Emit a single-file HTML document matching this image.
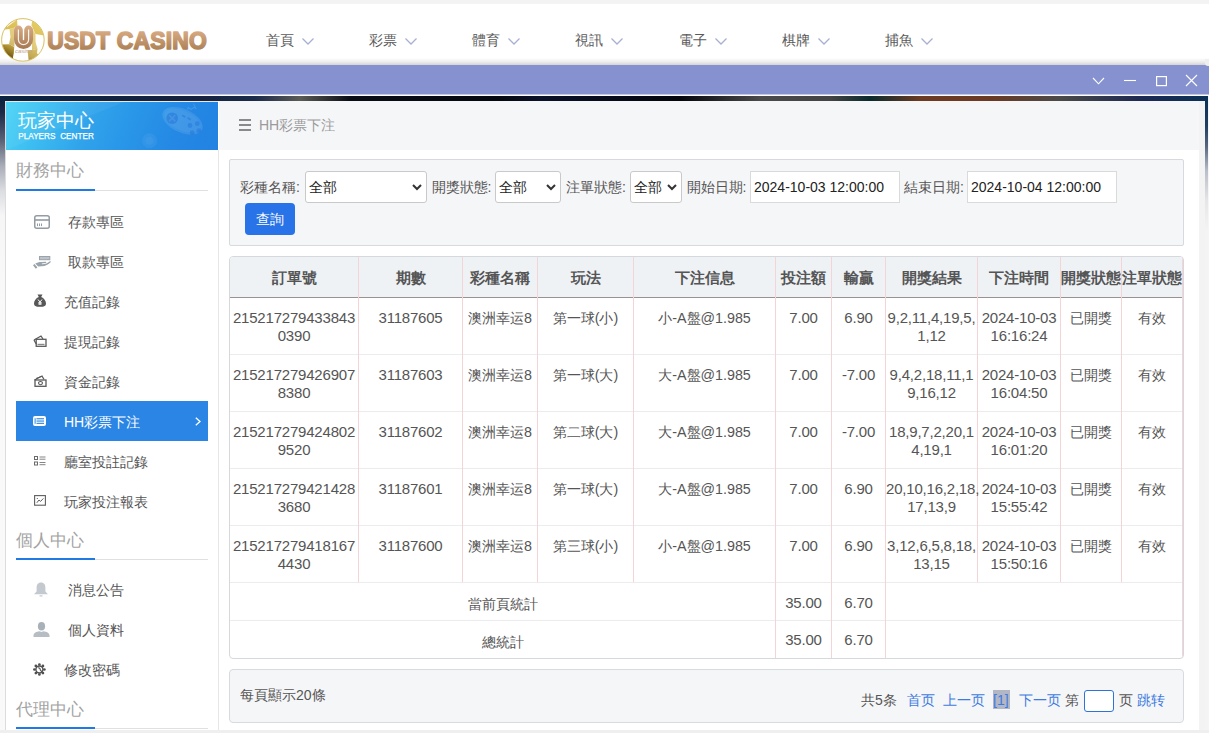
<!DOCTYPE html>
<html><head><meta charset="utf-8">
<style>
*{box-sizing:border-box}
html,body{margin:0;padding:0}
body{width:1209px;height:733px;overflow:hidden;position:relative;background:#fff;font-family:"Liberation Sans",sans-serif;color:#555}
.a{position:absolute}
.nav{position:absolute;top:31px;font-size:14px;color:#5a5a5a;line-height:18px;white-space:nowrap}
.nav svg{position:absolute;top:7px}
.lbl{font-size:14px;line-height:20px;color:#555;white-space:nowrap}
.sel{font-size:14px;line-height:20px;color:#222;white-space:nowrap}
.th{font-size:15px;line-height:20px;font-weight:700;color:#555;text-align:center;white-space:nowrap}
.td{line-height:18px;color:#555;text-align:center;white-space:nowrap}
.tn{font-size:15px;letter-spacing:-0.2px;line-height:18.3px;padding-top:1.5px}
.tc{font-size:14.3px;padding-top:1.5px}
.pg{font-size:14px;line-height:20px;color:#555;white-space:nowrap}
.lk{color:#3d7be0}
</style></head><body>
<!-- top strip -->
<div class="a" style="left:0;top:0;width:1209px;height:4px;background:#f3f3f3"></div>
<!-- header -->
<div class="a" style="left:0;top:4px;width:1209px;height:61px;background:linear-gradient(#fff 0,#fff 54px,#ececec 58px,#d4d4d4 61px)"></div>
<svg class="a" style="left:0;top:16px" width="48" height="48" viewBox="0 0 48 48">
<defs>
<linearGradient id="gold" gradientUnits="userSpaceOnUse" x1="32" y1="3" x2="12" y2="44"><stop offset="0" stop-color="#e6cc66"/><stop offset="0.5" stop-color="#d8bb50"/><stop offset="0.75" stop-color="#b89a38"/><stop offset="1" stop-color="#634a0c"/></linearGradient>
<linearGradient id="brn" gradientUnits="userSpaceOnUse" x1="0" y1="10" x2="0" y2="33"><stop offset="0" stop-color="#d7ab84"/><stop offset="1" stop-color="#a57850"/></linearGradient>
<clipPath id="cc"><circle cx="22.9" cy="23.9" r="21.2"/></clipPath>
<filter id="bl" x="-5%" y="-5%" width="110%" height="110%"><feGaussianBlur stdDeviation="0.45"/></filter>
</defs>
<circle cx="22.9" cy="23.9" r="21.6" fill="#fff"/>
<g clip-path="url(#cc)"><g fill="url(#gold)" filter="url(#bl)">
<path d="M1 14 L6 7 L16.7 1 L17.5 9.5 L14.4 11.8 L9.5 13 Z"/>
<path d="M32.7 1 L42 5 L46 14 L44 19.6 L35.5 18 L31.5 9.2 Z"/>
<path d="M9.5 13 L14.4 11.8 L14.4 30.8 L9 28.2 L10.5 21 Z" fill-opacity="0.75"/>
<path d="M0 28.5 L9 28.2 L14.2 31 L13.8 37 L13 41 L4 41 L0 35 Z"/>
<path d="M32 11.8 L35.5 18 L35.5 26 L37.5 32.7 L32 34 Z" fill-opacity="0.75"/>
<path d="M27.5 34.2 L32 34 L37.5 32.7 L37 37.2 L41 41 L33 46 L28.8 45.5 Z" fill-opacity="0.85"/>
<path d="M13 41 L13 47 L6 45 L3 40 Z"/>
</g></g>
<path d="M6.8 10.5 L15.8 3.8" stroke="#fff" stroke-width="1.3" stroke-opacity="0.85"/>
<circle cx="22.9" cy="23.9" r="21.3" fill="none" stroke="#d9c060" stroke-width="1"/>
<path d="M18.4 14 V23.5 A5.1 5.1 0 0 0 28.6 23.5 V14" fill="none" stroke="url(#brn)" stroke-width="8.8" stroke-linecap="round"/>
<path d="M18.4 13.6 V23.5 A5.1 5.1 0 0 0 28.6 23.5 V13.6" fill="none" stroke="#fff" stroke-opacity="0.9" stroke-width="1.2"/>
<text x="23.5" y="36.8" font-size="4.8" fill="#c4a48a" text-anchor="middle" font-family="Liberation Sans" font-style="italic" textLength="17" lengthAdjust="spacingAndGlyphs">casino</text>
</svg>

<svg class="a" style="left:40px;top:22px" width="180" height="34" viewBox="0 0 180 34">
<defs><linearGradient id="tg" x1="0" y1="0" x2="0" y2="1"><stop offset="0" stop-color="#dfb189"/><stop offset="1" stop-color="#a3774c"/></linearGradient></defs>
<text x="7.2" y="27.3" font-family="Liberation Sans" font-weight="bold" font-size="22.9" fill="url(#tg)" stroke="url(#tg)" stroke-width="1.5" stroke-linejoin="round" transform="scale(1,1.06)" transform-origin="0 27.3" letter-spacing="0.2">USDT CASINO</text>
</svg>
<div class="nav" style="left:265.5px">首頁<svg width="12" height="7" viewBox="0 0 12 7" style="left:36px"><path d="M0.5 0.5 L6 6 L11.5 0.5" fill="none" stroke="#a9afd3" stroke-width="1.3"/></svg></div>
<div class="nav" style="left:368.8px">彩票<svg width="12" height="7" viewBox="0 0 12 7" style="left:36px"><path d="M0.5 0.5 L6 6 L11.5 0.5" fill="none" stroke="#a9afd3" stroke-width="1.3"/></svg></div>
<div class="nav" style="left:472.1px">體育<svg width="12" height="7" viewBox="0 0 12 7" style="left:36px"><path d="M0.5 0.5 L6 6 L11.5 0.5" fill="none" stroke="#a9afd3" stroke-width="1.3"/></svg></div>
<div class="nav" style="left:575.4px">視訊<svg width="12" height="7" viewBox="0 0 12 7" style="left:36px"><path d="M0.5 0.5 L6 6 L11.5 0.5" fill="none" stroke="#a9afd3" stroke-width="1.3"/></svg></div>
<div class="nav" style="left:678.7px">電子<svg width="12" height="7" viewBox="0 0 12 7" style="left:36px"><path d="M0.5 0.5 L6 6 L11.5 0.5" fill="none" stroke="#a9afd3" stroke-width="1.3"/></svg></div>
<div class="nav" style="left:782px">棋牌<svg width="12" height="7" viewBox="0 0 12 7" style="left:36px"><path d="M0.5 0.5 L6 6 L11.5 0.5" fill="none" stroke="#a9afd3" stroke-width="1.3"/></svg></div>
<div class="nav" style="left:885.3px">捕魚<svg width="12" height="7" viewBox="0 0 12 7" style="left:36px"><path d="M0.5 0.5 L6 6 L11.5 0.5" fill="none" stroke="#a9afd3" stroke-width="1.3"/></svg></div>

<!-- purple bar -->
<div class="a" style="left:0;top:65px;width:1209px;height:29px;background:#8692cf"></div>
<div class="a" style="left:1205px;top:59px;width:4px;height:7px;background:#efefef;border-bottom-left-radius:3px"></div>
<div class="a" style="left:0;top:94px;width:1209px;height:1px;background:#c4c9e8"></div>
<svg class="a" style="left:1085px;top:70px" width="124" height="22" viewBox="0 0 124 22">
<path d="M8 8 L13.5 13.8 L19 8" fill="none" stroke="#fff" stroke-width="1.1"/>
<path d="M39 10.5 H51" stroke="#fff" stroke-width="1.1"/>
<rect x="71.6" y="6.6" width="9.8" height="9" fill="none" stroke="#fff" stroke-width="1.2"/>
<path d="M101 5 L112 16 M112 5 L101 16" stroke="#fff" stroke-width="1.1"/>
</svg><div class="a" style="left:0;top:95px;width:1209px;height:1px;background:#fff"></div>
<!-- dark bg -->
<div class="a" style="left:0;top:96px;width:1209px;height:637px;background:linear-gradient(90deg,#0b2440 0,#17233f 200px,#1c2b4a 255px,#5b5b56 300px,#0a0d15 350px,#05080f 500px,#0a1228 540px,#05060c 680px,#4a4a4a 760px,#444 830px,#0b2a2c 870px,#6b3b22 920px,#6a3a22 990px,#4b4a48 1060px,#1d2a52 1140px,#0b3256 1209px)"></div>
<div class="a" style="left:0;top:101px;width:5px;height:632px;background:linear-gradient(#0e2442 0,#1d2c48 12px,#5b6478 40px,#a9adb8 65px,#dcdde2 90px,#f6f6f7 115px,#f9f9f9 200px)"></div>
<div class="a" style="left:1205px;top:101px;width:3px;height:632px;background:linear-gradient(#0b3256 0,#1f3f62 25px,#56667e 45px,#b9bec8 70px,#e6e6e8 100px,#f4f4f4 130px)"></div><div class="a" style="left:1204px;top:200px;width:1px;height:530px;background:#e2e2e2"></div>
<div class="a" style="left:1208px;top:96px;width:1px;height:637px;background:#f5f5f5"></div>
<!-- window -->
<div id="win">
<div class="a" style="left:5px;top:101px;width:1200px;height:629px;background:#fff"></div>
<!-- sidebar -->
<div class="a" style="left:5px;top:101px;width:214px;height:629px;background:#fff;border-left:1px solid #dcdcdc"></div>
<div class="a" style="left:218px;top:150px;width:1px;height:580px;background:#e6e6e6"></div>
<div class="a" style="left:5px;top:101px;width:213px;height:1px;background:#e9e9e9"></div>
<div class="a" style="left:6px;top:102px;width:212px;height:48px;overflow:hidden;background:linear-gradient(112deg,#4ad4f6 0%,#3ab9f0 22%,#30a3eb 40%,#2996e8 58%,#2488e4 80%,#2282e2 100%)">
  <svg class="a" style="left:0;top:0" width="212" height="48"><path d="M0 0 L118 0 L0 48 Z" fill="#fff" fill-opacity="0.05"/></svg>
  <svg class="a" style="left:0;top:0" width="212" height="48" viewBox="0 0 212 48">
    <ellipse cx="176.5" cy="18.8" rx="21.5" ry="11.8" transform="rotate(24 176.5 18.8)" fill="#fff" fill-opacity="0.1"/>
    <ellipse cx="176.5" cy="18.8" rx="19.5" ry="9.8" transform="rotate(24 176.5 18.8)" fill="#fff" fill-opacity="0.04"/>
    <circle cx="166.2" cy="16.2" r="5.8" fill="#1a6fd8" fill-opacity="0.45"/>
    <path d="M163 13 L169.4 19.4 M169.4 13 L163 19.4" stroke="#fff" stroke-opacity="0.1" stroke-width="1.6"/>
    <g fill="#1a6fd8" fill-opacity="0.4"><circle cx="184" cy="23.5" r="2.4"/><circle cx="191.3" cy="21.7" r="2.4"/><circle cx="186.2" cy="30.7" r="2.4"/><circle cx="192.8" cy="28.6" r="2.4"/></g>
    <path d="M176.2 13.3 L179.3 15 M181.5 15.8 L184.8 17.8" stroke="#1a6fd8" stroke-opacity="0.4" stroke-width="1.8"/>
    <path d="M181.5 7.5 L182.2 5.3 L185 7.5 L188 5.3 L190.2 6.7 L187.3 1.6" stroke="#fff" stroke-opacity="0.12" fill="none" stroke-width="1.1"/>
    <circle cx="143.6" cy="38.8" r="7.5" fill="#fff" fill-opacity="0.05"/>
    <circle cx="143.6" cy="38.8" r="4" fill="#fff" fill-opacity="0.04"/>
  </svg>
  <div class="a" style="left:11.5px;top:8px;font-size:18.5px;line-height:22px;color:#fff;letter-spacing:0.3px">玩家中心</div>
  <div class="a" style="left:12.3px;top:30px;font-size:8.2px;line-height:10px;color:#fff;font-weight:normal;word-spacing:2.4px;-webkit-text-stroke:0.25px #fff">PLAYERS CENTER</div>
</div>
</div>
<div class="a" style="left:15.5px;top:161px;font-size:17px;line-height:20px;color:#a3a3a3">財務中心</div>
<div class="a" style="left:16px;top:190px;width:192px;height:1px;background:#e0e0e0"></div>
<div class="a" style="left:16px;top:189px;width:79px;height:2px;background:#1f7ae3"></div>
<div class="a" style="left:15.5px;top:530.5px;font-size:17px;line-height:20px;color:#a3a3a3">個人中心</div>
<div class="a" style="left:16px;top:559px;width:192px;height:1px;background:#e0e0e0"></div>
<div class="a" style="left:16px;top:558px;width:79px;height:2px;background:#1f7ae3"></div>
<div class="a" style="left:15.5px;top:699.5px;font-size:17px;line-height:20px;color:#a3a3a3">代理中心</div>
<div class="a" style="left:16px;top:728px;width:192px;height:1px;background:#e0e0e0"></div>
<div class="a" style="left:16px;top:727px;width:79px;height:2px;background:#1f7ae3"></div>
<div class="a" style="left:68px;top:211.5px;font-size:14px;line-height:20px;color:#555;white-space:nowrap">存款專區</div>
<svg class="a" style="left:34px;top:215px" width="16" height="14" viewBox="0 0 16 14"><rect x="0.75" y="0.75" width="14.5" height="12.5" rx="2" fill="none" stroke="#939ba3" stroke-width="1.5"/><rect x="1" y="4.2" width="14" height="1.6" fill="#939ba3"/><rect x="3" y="8.5" width="1" height="2.6" fill="#939ba3"/><rect x="5" y="8.5" width="1" height="2.6" fill="#939ba3"/><rect x="7" y="8.5" width="1" height="2.6" fill="#939ba3"/></svg>
<div class="a" style="left:68px;top:251.5px;font-size:14px;line-height:20px;color:#555;white-space:nowrap">取款專區</div>
<svg class="a" style="left:33px;top:256px" width="18" height="13" viewBox="0 0 18 13"><rect x="6.5" y="0.5" width="10.3" height="3.2" fill="#bcc3ca" stroke="#9aa2aa" stroke-width="1"/><path d="M2.3 7.6 C4 6.4 6 5.9 8 5.9 L12.6 5.7 C13.6 5.7 13.6 6.9 12.6 7.1 L8.6 7.5 L9.1 8.3 C12 8.3 15 7 17.3 5 L17.8 5.9 C15.5 8.5 12.5 10 8.5 10.3 L5.2 10.5 Z" fill="#9aa2aa"/><path d="M0.8 8.6 L3.6 12.2" stroke="#9aa2aa" stroke-width="2"/></svg>
<div class="a" style="left:64px;top:291.5px;font-size:14px;line-height:20px;color:#555;white-space:nowrap">充值記錄</div>
<svg class="a" style="left:33px;top:294px" width="14" height="13" viewBox="0 0 14 13"><path d="M4.5 0.5 L9.5 0.5 L8.2 3 C11 4 13 7 13 9.5 C13 12 11 12.8 7 12.8 C3 12.8 1 12 1 9.5 C1 7 3 4 5.8 3 Z" fill="#575757"/><path d="M5 5.5 L7 8 L9 5.5 M7 8 L7 11 M5.3 8.8 L8.7 8.8 M5.3 10 L8.7 10" stroke="#fff" stroke-width="1" fill="none"/></svg>
<div class="a" style="left:64px;top:331.5px;font-size:14px;line-height:20px;color:#555;white-space:nowrap">提現記錄</div>
<svg class="a" style="left:33px;top:335px" width="14" height="12" viewBox="0 0 14 12"><path d="M1 5 L8 1 L10 4" fill="none" stroke="#5a5a5a" stroke-width="1.3"/><rect x="3.2" y="4.3" width="9.8" height="7" fill="none" stroke="#5a5a5a" stroke-width="1.3"/><path d="M1 5 L3.2 9" stroke="#5a5a5a" stroke-width="1.3"/><rect x="4.5" y="8.8" width="7" height="1.2" fill="#8a8a8a"/></svg>
<div class="a" style="left:64px;top:371.5px;font-size:14px;line-height:20px;color:#555;white-space:nowrap">資金記錄</div>
<svg class="a" style="left:33px;top:375px" width="14" height="12" viewBox="0 0 14 12"><path d="M1.5 5 L9 1 L11 4.5" fill="none" stroke="#5a5a5a" stroke-width="1.3"/><rect x="2" y="5" width="11" height="6.3" fill="none" stroke="#5a5a5a" stroke-width="1.3"/><ellipse cx="7.5" cy="8.1" rx="2" ry="1.6" fill="none" stroke="#5a5a5a" stroke-width="1.1"/><path d="M3 3.5 L8 1.5" stroke="#5a5a5a" stroke-width="1"/></svg>
<div class="a" style="left:16px;top:401px;width:192px;height:40px;background:#2b85e4"></div>
<svg class="a" style="left:195px;top:417px" width="6" height="9" viewBox="0 0 6 9"><path d="M0.8 0.8 L5 4.5 L0.8 8.2" fill="none" stroke="#fff" stroke-width="1.3"/></svg>
<div class="a" style="left:64px;top:411.5px;font-size:14px;line-height:20px;color:#fff;white-space:nowrap">HH彩票下注</div>
<svg class="a" style="left:33px;top:416px" width="13" height="10" viewBox="0 0 13 10"><rect x="0" y="0" width="13" height="10" rx="2" fill="#fff"/><rect x="3.5" y="2.2" width="7.5" height="1.1" fill="#2b85e4"/><rect x="3.5" y="4.5" width="7.5" height="1.1" fill="#2b85e4"/><rect x="3.5" y="6.8" width="7.5" height="1.1" fill="#2b85e4"/><rect x="1.6" y="2.2" width="1" height="5.6" fill="#2b85e4"/></svg>
<div class="a" style="left:64px;top:451.5px;font-size:14px;line-height:20px;color:#555;white-space:nowrap">廳室投註記錄</div>
<svg class="a" style="left:34px;top:456px" width="12" height="10" viewBox="0 0 12 10"><rect x="0.5" y="0.5" width="3" height="3" fill="none" stroke="#6a6a6a" stroke-width="1"/><rect x="0.5" y="6" width="3" height="3" fill="none" stroke="#6a6a6a" stroke-width="1"/><path d="M5.5 1 H11.5 M5.5 3.2 H11.5 M5.5 6.5 H11.5 M5.5 8.7 H11.5" stroke="#777" stroke-width="0.9"/></svg>
<div class="a" style="left:64px;top:491.5px;font-size:14px;line-height:20px;color:#555;white-space:nowrap">玩家投注報表</div>
<svg class="a" style="left:34px;top:495px" width="12" height="11" viewBox="0 0 12 11"><rect x="0.6" y="0.6" width="10.8" height="9.6" fill="none" stroke="#5e5e5e" stroke-width="1.1"/><path d="M2.8 7.8 L5 5 L6.6 6.4 L9.4 3.4 M2.8 3 L3.8 4" fill="none" stroke="#5e5e5e" stroke-width="1"/></svg>
<div class="a" style="left:67.5px;top:580px;font-size:14px;line-height:20px;color:#555;white-space:nowrap">消息公告</div>
<svg class="a" style="left:33px;top:582px" width="16" height="15" viewBox="0 0 16 15"><path d="M8 0.5 C4.8 0.5 3.6 3 3.6 5.5 L3.6 9.5 L1 12.3 L15 12.3 L12.4 9.5 L12.4 5.5 C12.4 3 11.2 0.5 8 0.5 Z" fill="#c3c9ce"/><rect x="6.5" y="13.3" width="3" height="1.2" fill="#c3c9ce"/></svg>
<div class="a" style="left:67.5px;top:620px;font-size:14px;line-height:20px;color:#555;white-space:nowrap">個人資料</div>
<svg class="a" style="left:33px;top:622px" width="17" height="15" viewBox="0 0 17 15"><ellipse cx="8.5" cy="4.3" rx="3.6" ry="4.3" fill="#a9b1b8"/><path d="M0.5 15 L0.5 13.5 C0.5 11 3.5 9.5 6.5 9.2 L8.5 10 L10.5 9.2 C13.5 9.5 16.5 11 16.5 13.5 L16.5 15 Z" fill="#b6bdc3"/></svg>
<div class="a" style="left:64px;top:660px;font-size:14px;line-height:20px;color:#555;white-space:nowrap">修改密碼</div>
<svg class="a" style="left:33px;top:663px" width="13" height="13" viewBox="0 0 13 13"><g fill="#505050"><circle cx="11.40" cy="6.50" r="1.35"/><circle cx="9.94" cy="10.04" r="1.35"/><circle cx="6.40" cy="11.50" r="1.35"/><circle cx="2.86" cy="10.04" r="1.35"/><circle cx="1.40" cy="6.50" r="1.35"/><circle cx="2.86" cy="2.96" r="1.35"/><circle cx="6.40" cy="1.50" r="1.35"/><circle cx="9.94" cy="2.96" r="1.35"/></g><circle cx="6.4" cy="6.5" r="3.5" fill="none" stroke="#505050" stroke-width="1.4"/><path d="M5.2 5.0 C6.4 4.6 7.6 5.6 7.2 6.8 L9 8.8" fill="none" stroke="#505050" stroke-width="1.1"/></svg>
<div class="a" style="left:219px;top:101px;width:980px;height:49px;background:#f5f6f8"></div>
<div class="a" style="left:1199px;top:101px;width:6px;height:629px;background:#f3f3f3"></div>
<div class="a" style="left:229px;top:159px;width:955px;height:87px;background:#f5f6f8;border:1px solid #d6dade;border-radius:2px"></div>
<div class="a lbl" style="left:240px;top:177px">彩種名稱:</div>
<div class="a" style="left:305px;top:171px;width:122px;height:32px;background:#fff;border:1px solid #c9c9c9;border-radius:3px"></div>
<div class="a sel" style="left:309px;top:177px">全部</div>
<svg class="a" style="left:412px;top:184px" width="10" height="7" viewBox="0 0 10 7"><path d="M1 1 L5 5 L9 1" fill="none" stroke="#333" stroke-width="2"/></svg>
<div class="a lbl" style="left:431.5px;top:177px">開獎狀態:</div>
<div class="a" style="left:495px;top:171px;width:66px;height:32px;background:#fff;border:1px solid #c9c9c9;border-radius:3px"></div>
<div class="a sel" style="left:499px;top:177px">全部</div>
<svg class="a" style="left:546px;top:184px" width="10" height="7" viewBox="0 0 10 7"><path d="M1 1 L5 5 L9 1" fill="none" stroke="#333" stroke-width="2"/></svg>
<div class="a lbl" style="left:566px;top:177px">注單狀態:</div>
<div class="a" style="left:630px;top:171px;width:52px;height:32px;background:#fff;border:1px solid #c9c9c9;border-radius:3px"></div>
<div class="a sel" style="left:634px;top:177px">全部</div>
<svg class="a" style="left:667px;top:184px" width="10" height="7" viewBox="0 0 10 7"><path d="M1 1 L5 5 L9 1" fill="none" stroke="#333" stroke-width="2"/></svg>
<div class="a lbl" style="left:686.5px;top:177px">開始日期:</div>
<div class="a" style="left:750px;top:171px;width:150px;height:32px;background:#fff;border:1px solid #dadada"></div><div class="a sel" style="left:754px;top:177px">2024-10-03 12:00:00</div>
<div class="a lbl" style="left:904px;top:177px">結束日期:</div>
<div class="a" style="left:967px;top:171px;width:150px;height:32px;background:#fff;border:1px solid #dadada"></div><div class="a sel" style="left:971px;top:177px">2024-10-04 12:00:00</div>
<div class="a" style="left:245px;top:203px;width:50px;height:32px;background:#2873e8;border-radius:4px;color:#fff;font-size:14px;line-height:32px;text-align:center">查詢</div>
<div class="a" style="left:229px;top:256px;width:955px;height:403px;background:#fff;border:1px solid #d5d9de;border-radius:4px;overflow:hidden">
<div class="a" style="left:0;top:0;width:952px;height:40px;background:#eef2f5"></div>
<div class="a" style="left:0;top:40px;width:952px;height:1px;background:#9b9191"></div>
<div class="a" style="left:0;top:97px;width:952px;height:1px;background:#eaeced"></div>
<div class="a" style="left:0;top:154px;width:952px;height:1px;background:#eaeced"></div>
<div class="a" style="left:0;top:211px;width:952px;height:1px;background:#eaeced"></div>
<div class="a" style="left:0;top:268px;width:952px;height:1px;background:#eaeced"></div>
<div class="a" style="left:0;top:325px;width:952px;height:1px;background:#eaeced"></div>
<div class="a" style="left:0;top:363px;width:952px;height:1px;background:#eaeced"></div>
<div class="a" style="left:128px;top:0;width:1px;height:325px;background:#f4d4d6"></div>
<div class="a" style="left:232px;top:0;width:1px;height:325px;background:#f4d4d6"></div>
<div class="a" style="left:307px;top:0;width:1px;height:325px;background:#f4d4d6"></div>
<div class="a" style="left:403px;top:0;width:1px;height:325px;background:#f4d4d6"></div>
<div class="a" style="left:545px;top:0;width:1px;height:401px;background:#f4d4d6"></div>
<div class="a" style="left:601px;top:0;width:1px;height:401px;background:#f4d4d6"></div>
<div class="a" style="left:655px;top:0;width:1px;height:401px;background:#f4d4d6"></div>
<div class="a" style="left:747px;top:0;width:1px;height:325px;background:#f4d4d6"></div>
<div class="a" style="left:830px;top:0;width:1px;height:325px;background:#f4d4d6"></div>
<div class="a" style="left:891px;top:0;width:1px;height:325px;background:#f4d4d6"></div>
<div class="a" style="left:952px;top:0;width:1px;height:401px;background:#f4d4d6"></div>
</div>
<div class="a th" style="left:230px;top:268px;width:128px">訂單號</div>
<div class="a th" style="left:359px;top:268px;width:103px">期數</div>
<div class="a th" style="left:463px;top:268px;width:74px">彩種名稱</div>
<div class="a th" style="left:538px;top:268px;width:95px">玩法</div>
<div class="a th" style="left:634px;top:268px;width:141px">下注信息</div>
<div class="a th" style="left:776px;top:268px;width:55px">投注額</div>
<div class="a th" style="left:832px;top:268px;width:53px">輸贏</div>
<div class="a th" style="left:886px;top:268px;width:91px">開獎結果</div>
<div class="a th" style="left:978px;top:268px;width:82px">下注時間</div>
<div class="a th" style="left:1061px;top:268px;width:60px">開獎狀態</div>
<div class="a th" style="left:1122px;top:268px;width:60px">注單狀態</div>
<div class="a td tn" style="left:230px;top:307px;width:128px">215217279433843<br>0390</div>
<div class="a td tn" style="left:359px;top:307px;width:103px">31187605</div>
<div class="a td tc" style="left:463px;top:307px;width:74px">澳洲幸运8</div>
<div class="a td tc" style="left:538px;top:307px;width:95px">第一球(小)</div>
<div class="a td tc" style="left:634px;top:307px;width:141px">小-A盤@1.985</div>
<div class="a td tn" style="left:776px;top:307px;width:55px">7.00</div>
<div class="a td tn" style="left:832px;top:307px;width:53px">6.90</div>
<div class="a td tn" style="left:886px;top:307px;width:91px">9,2,11,4,19,5,<br>1,12</div>
<div class="a td tn" style="left:978px;top:307px;width:82px">2024-10-03<br>16:16:24</div>
<div class="a td tc" style="left:1061px;top:307px;width:60px">已開獎</div>
<div class="a td tc" style="left:1122px;top:307px;width:60px">有效</div>
<div class="a td tn" style="left:230px;top:364px;width:128px">215217279426907<br>8380</div>
<div class="a td tn" style="left:359px;top:364px;width:103px">31187603</div>
<div class="a td tc" style="left:463px;top:364px;width:74px">澳洲幸运8</div>
<div class="a td tc" style="left:538px;top:364px;width:95px">第一球(大)</div>
<div class="a td tc" style="left:634px;top:364px;width:141px">大-A盤@1.985</div>
<div class="a td tn" style="left:776px;top:364px;width:55px">7.00</div>
<div class="a td tn" style="left:832px;top:364px;width:53px">-7.00</div>
<div class="a td tn" style="left:886px;top:364px;width:91px">9,4,2,18,11,1<br>9,16,12</div>
<div class="a td tn" style="left:978px;top:364px;width:82px">2024-10-03<br>16:04:50</div>
<div class="a td tc" style="left:1061px;top:364px;width:60px">已開獎</div>
<div class="a td tc" style="left:1122px;top:364px;width:60px">有效</div>
<div class="a td tn" style="left:230px;top:421px;width:128px">215217279424802<br>9520</div>
<div class="a td tn" style="left:359px;top:421px;width:103px">31187602</div>
<div class="a td tc" style="left:463px;top:421px;width:74px">澳洲幸运8</div>
<div class="a td tc" style="left:538px;top:421px;width:95px">第二球(大)</div>
<div class="a td tc" style="left:634px;top:421px;width:141px">大-A盤@1.985</div>
<div class="a td tn" style="left:776px;top:421px;width:55px">7.00</div>
<div class="a td tn" style="left:832px;top:421px;width:53px">-7.00</div>
<div class="a td tn" style="left:886px;top:421px;width:91px">18,9,7,2,20,1<br>4,19,1</div>
<div class="a td tn" style="left:978px;top:421px;width:82px">2024-10-03<br>16:01:20</div>
<div class="a td tc" style="left:1061px;top:421px;width:60px">已開獎</div>
<div class="a td tc" style="left:1122px;top:421px;width:60px">有效</div>
<div class="a td tn" style="left:230px;top:478px;width:128px">215217279421428<br>3680</div>
<div class="a td tn" style="left:359px;top:478px;width:103px">31187601</div>
<div class="a td tc" style="left:463px;top:478px;width:74px">澳洲幸运8</div>
<div class="a td tc" style="left:538px;top:478px;width:95px">第一球(大)</div>
<div class="a td tc" style="left:634px;top:478px;width:141px">大-A盤@1.985</div>
<div class="a td tn" style="left:776px;top:478px;width:55px">7.00</div>
<div class="a td tn" style="left:832px;top:478px;width:53px">6.90</div>
<div class="a td tn" style="left:886px;top:478px;width:91px">20,10,16,2,18,<br>17,13,9</div>
<div class="a td tn" style="left:978px;top:478px;width:82px">2024-10-03<br>15:55:42</div>
<div class="a td tc" style="left:1061px;top:478px;width:60px">已開獎</div>
<div class="a td tc" style="left:1122px;top:478px;width:60px">有效</div>
<div class="a td tn" style="left:230px;top:535px;width:128px">215217279418167<br>4430</div>
<div class="a td tn" style="left:359px;top:535px;width:103px">31187600</div>
<div class="a td tc" style="left:463px;top:535px;width:74px">澳洲幸运8</div>
<div class="a td tc" style="left:538px;top:535px;width:95px">第三球(小)</div>
<div class="a td tc" style="left:634px;top:535px;width:141px">小-A盤@1.985</div>
<div class="a td tn" style="left:776px;top:535px;width:55px">7.00</div>
<div class="a td tn" style="left:832px;top:535px;width:53px">6.90</div>
<div class="a td tn" style="left:886px;top:535px;width:91px">3,12,6,5,8,18,<br>13,15</div>
<div class="a td tn" style="left:978px;top:535px;width:82px">2024-10-03<br>15:50:16</div>
<div class="a td tc" style="left:1061px;top:535px;width:60px">已開獎</div>
<div class="a td tc" style="left:1122px;top:535px;width:60px">有效</div>
<div class="a td tc" style="left:230px;top:593px;width:545px">當前頁統計</div>
<div class="a td tn" style="left:776px;top:592px;width:55px">35.00</div>
<div class="a td tn" style="left:832px;top:592px;width:53px">6.70</div>
<div class="a td tc" style="left:230px;top:631px;width:545px">總統計</div>
<div class="a td tn" style="left:776px;top:629.5px;width:55px">35.00</div>
<div class="a td tn" style="left:832px;top:629.5px;width:53px">6.70</div>

<div class="a" style="left:229px;top:669px;width:955px;height:54px;background:#f5f6f8;border:1px solid #d7dbe0;border-radius:4px"></div>
<div class="a pg" style="left:240px;top:685px">每頁顯示20條</div>
<div class="a pg" style="left:861px;top:690px">共5条</div>
<div class="a pg lk" style="left:906.5px;top:690px">首页</div>
<div class="a pg lk" style="left:942.5px;top:690px">上一页</div>
<div class="a" style="left:993px;top:690px;width:17px;height:19px;background:#b3b6c4"></div><div class="a pg lk" style="left:993px;top:690px">[1]</div>
<div class="a pg lk" style="left:1018.5px;top:690px">下一页</div>
<div class="a pg" style="left:1064.5px;top:690px">第</div>
<div class="a" style="left:1084px;top:690px;width:30px;height:22px;background:#fff;border:1px solid #2f73d9;border-radius:3px"></div>
<div class="a pg" style="left:1118.5px;top:690px">页</div>
<div class="a pg lk" style="left:1136.5px;top:690px">跳转</div>

<svg class="a" style="left:239px;top:119px" width="12" height="12" viewBox="0 0 12 12"><rect x="0" y="0" width="12" height="2" fill="#8a8a8a"/><rect x="0" y="5" width="12" height="2" fill="#8a8a8a"/><rect x="0" y="10" width="12" height="2" fill="#8a8a8a"/></svg>
<div class="a" style="left:259px;top:115px;font-size:14px;line-height:20px;color:#9a9a9a">HH彩票下注</div>
</div>
<!-- bottom strip -->
<div class="a" style="left:0;top:730px;width:1209px;height:3px;background:#efefef"></div>
</body></html>
